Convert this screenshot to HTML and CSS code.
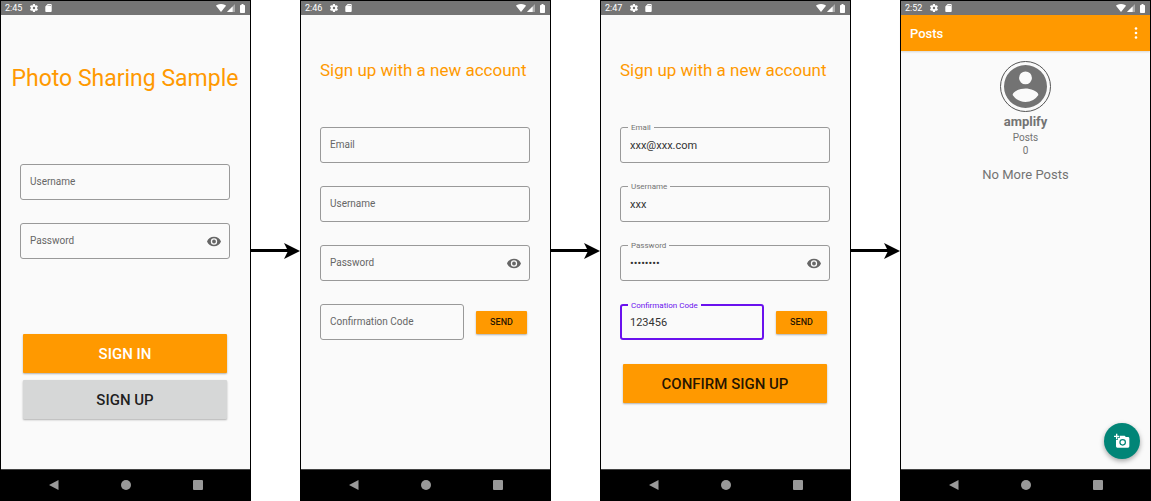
FILE: index.html
```html
<!DOCTYPE html>
<html lang="en">
<head>
    <meta charset="UTF-8">
    <meta name="viewport" content="width=device-width, initial-scale=1.0">
    <title>Photo Sharing Sample</title>
    <link rel="stylesheet" href="styles.css">
</head>
<body>
    <!-- Shared icons -->
    <svg class="sprite" aria-hidden="true">
        <symbol id="gear" viewBox="2 2 20 20">
            <path d="M19.4 13a7.500 7.500 0 0 0 0-2l2.200-1.600c.2-.2.2-.4.1-.7l-2.100-3.600c-.1-.2-.4-.3-.6-.2l-2.500 1a7.300 7.300 0 0 0-1.700-1l-.4-2.600a.5.5 0 0 0-.5-.4H9.800a.5.5 0 0 0-.5.4l-.4 2.600a7.300 7.300 0 0 0-1.700 1l-2.500-1c-.2-.1-.5 0-.6.2L2 8.700c-.1.2-.1.5.1.7L4.300 11a7.500 7.500 0 0 0 0 2l-2.200 1.600c-.2.2-.2.4-.1.7l2.100 3.600c.1.2.4.3.6.2l2.500-1c.5.4 1.100.7 1.700 1l.4 2.600c0 .2.2.4.5.4h4.200c.2 0 .5-.2.5-.4l.4-2.600c.6-.3 1.200-.6 1.700-1l2.500 1c.2.1.5 0 .6-.2l2.100-3.600c.1-.2.1-.5-.1-.7zM12 15a3 3 0 1 1 0-6 3 3 0 0 1 0 6z"/>
        </symbol>
        <symbol id="sd" viewBox="0 0 16 20">
            <path d="M14 0H6L0 6v12c0 1.100.9 2 2 2h12c1.100 0 2-.9 2-2V2c0-1.100-.9-2-2-2zM8 5H6V3h2zm3 0H9V3h2zm3 0h-2V3h2z"/>
        </symbol>
        <symbol id="wifi" viewBox="0 0 24 19">
            <path d="M12 19 24 4C23.500 3.600 19 0 12 0S.5 3.600 0 4z"/>
        </symbol>
        <symbol id="signal" viewBox="0 0 20 20">
            <path opacity=".4" d="M0 20h20V0z"/>
            <path d="M0 20h14V6z"/>
        </symbol>
        <symbol id="battery" viewBox="0 0 10 18">
            <path d="M8.700 2H7V0H3v2H1.300C.6 2 0 2.600 0 3.300v13.400C0 17.400.6 18 1.300 18h7.400c.7 0 1.300-.6 1.300-1.300V3.300C10 2.600 9.400 2 8.700 2z"/>
        </symbol>
        <symbol id="eye" viewBox="1 4 22 16">
            <path d="M12 4.500C7 4.500 2.700 7.600 1 12c1.700 4.400 6 7.500 11 7.500s9.300-3.100 11-7.500c-1.700-4.400-6-7.500-11-7.500zM12 17a5 5 0 1 1 0-10 5 5 0 0 1 0 10zm0-8a3 3 0 1 0 0 6 3 3 0 0 0 0-6z"/>
        </symbol>
        <symbol id="more" viewBox="0 0 4 12">
            <circle cx="2" cy="1.500" r="1.300"/><circle cx="2" cy="6" r="1.300"/><circle cx="2" cy="10.500" r="1.300"/>
        </symbol>
        <symbol id="person" viewBox="2 2 20 20">
            <path d="M12 2a10 10 0 1 0 0 20 10 10 0 0 0 0-20zm0 3a3 3 0 1 1 0 6 3 3 0 0 1 0-6zm0 14.200a7.200 7.200 0 0 1-6-3.220c.03-1.990 4-3.080 6-3.080s5.970 1.090 6 3.080a7.200 7.200 0 0 1-6 3.220z"/>
        </symbol>
        <symbol id="add-photo" viewBox="0 0 24 24">
            <path d="M3 4V1h2v3h3v2H5v3H3V6H0V4zm3 6V7h3V4h7l1.800 2H21a2 2 0 0 1 2 2v12a2 2 0 0 1-2 2H5a2 2 0 0 1-2-2V10zm7 9a5 5 0 1 0 0-10 5 5 0 0 0 0 10zm-3.200-5a3.200 3.200 0 1 0 6.400 0 3.200 3.200 0 0 0-6.400 0z"/>
        </symbol>
        <symbol id="back" viewBox="0 0 10 10"><path d="M9.500 0v10L0 5z"/></symbol>
        <symbol id="home" viewBox="0 0 10 10"><circle cx="5" cy="5" r="5"/></symbol>
        <symbol id="recent" viewBox="0 0 10 10"><rect width="10" height="10" rx="1"/></symbol>
        <symbol id="arrow-head" viewBox="0 0 16 16"><path d="M16 8 0 16l4-8-4-8z"/></symbol>
    </svg>

    <div class="flow">
        <!-- Sign in -->
        <section class="phone">
            <div class="status-bar">
                <span class="time">2:45</span>
                <svg class="icon-gear"><use href="#gear"/></svg>
                <svg class="icon-sd"><use href="#sd"/></svg>
                <span class="spacer"></span>
                <svg class="icon-wifi"><use href="#wifi"/></svg>
                <svg class="icon-signal"><use href="#signal"/></svg>
                <svg class="icon-battery"><use href="#battery"/></svg>
            </div>
            <form class="screen">
                <h1 class="app-title">Photo Sharing Sample</h1>
                <div class="fields">
                    <div class="field">
                        <input type="text" id="login-username" placeholder=" ">
                        <label for="login-username">Username</label>
                    </div>
                    <div class="field">
                        <input type="password" id="login-password" placeholder=" ">
                        <label for="login-password">Password</label>
                        <button type="button" class="toggle" aria-label="Show password"><svg><use href="#eye"/></svg></button>
                    </div>
                </div>
                <div class="actions login-actions">
                    <button type="button" class="btn btn-primary btn-light">Sign in</button>
                    <button type="button" class="btn btn-grey">Sign up</button>
                </div>
            </form>
            <nav class="nav-bar">
                <button type="button" aria-label="Back"><svg><use href="#back"/></svg></button>
                <button type="button" aria-label="Home"><svg><use href="#home"/></svg></button>
                <button type="button" aria-label="Recent apps"><svg><use href="#recent"/></svg></button>
            </nav>
        </section>

        <div class="arrow"><span class="line"></span><svg><use href="#arrow-head"/></svg></div>

        <!-- Sign up, empty -->
        <section class="phone">
            <div class="status-bar">
                <span class="time">2:46</span>
                <svg class="icon-gear"><use href="#gear"/></svg>
                <svg class="icon-sd"><use href="#sd"/></svg>
                <span class="spacer"></span>
                <svg class="icon-wifi"><use href="#wifi"/></svg>
                <svg class="icon-signal"><use href="#signal"/></svg>
                <svg class="icon-battery"><use href="#battery"/></svg>
            </div>
            <form class="screen">
                <h2 class="form-title">Sign up with a new account</h2>
                <div class="fields">
                    <div class="field">
                        <input type="text" id="new-email" placeholder=" ">
                        <label for="new-email">Email</label>
                    </div>
                    <div class="field">
                        <input type="text" id="new-username" placeholder=" ">
                        <label for="new-username">Username</label>
                    </div>
                    <div class="field">
                        <input type="password" id="new-password" placeholder=" ">
                        <label for="new-password">Password</label>
                        <button type="button" class="toggle" aria-label="Show password"><svg><use href="#eye"/></svg></button>
                    </div>
                    <div class="code-row">
                        <div class="field">
                            <input type="text" id="new-code" placeholder=" ">
                            <label for="new-code">Confirmation Code</label>
                        </div>
                        <button type="button" class="btn btn-primary btn-small">Send</button>
                    </div>
                </div>
            </form>
            <nav class="nav-bar">
                <button type="button" aria-label="Back"><svg><use href="#back"/></svg></button>
                <button type="button" aria-label="Home"><svg><use href="#home"/></svg></button>
                <button type="button" aria-label="Recent apps"><svg><use href="#recent"/></svg></button>
            </nav>
        </section>

        <div class="arrow"><span class="line"></span><svg><use href="#arrow-head"/></svg></div>

        <!-- Sign up, filled in -->
        <section class="phone">
            <div class="status-bar">
                <span class="time">2:47</span>
                <svg class="icon-gear"><use href="#gear"/></svg>
                <svg class="icon-sd"><use href="#sd"/></svg>
                <span class="spacer"></span>
                <svg class="icon-wifi"><use href="#wifi"/></svg>
                <svg class="icon-signal"><use href="#signal"/></svg>
                <svg class="icon-battery"><use href="#battery"/></svg>
            </div>
            <form class="screen">
                <h2 class="form-title">Sign up with a new account</h2>
                <div class="fields">
                    <div class="field">
                        <input type="text" id="email" placeholder=" " value="xxx@xxx.com">
                        <label for="email">Email</label>
                    </div>
                    <div class="field">
                        <input type="text" id="username" placeholder=" " value="xxx">
                        <label for="username">Username</label>
                    </div>
                    <div class="field">
                        <input type="password" id="password" placeholder=" " value="password">
                        <label for="password">Password</label>
                        <button type="button" class="toggle" aria-label="Show password"><svg><use href="#eye"/></svg></button>
                    </div>
                    <div class="code-row">
                        <div class="field active">
                            <input type="text" id="code" placeholder=" " value="123456">
                            <label for="code">Confirmation Code</label>
                        </div>
                        <button type="button" class="btn btn-primary btn-small">Send</button>
                    </div>
                </div>
                <div class="actions confirm-actions">
                    <button type="button" class="btn btn-primary">Confirm sign up</button>
                </div>
            </form>
            <nav class="nav-bar">
                <button type="button" aria-label="Back"><svg><use href="#back"/></svg></button>
                <button type="button" aria-label="Home"><svg><use href="#home"/></svg></button>
                <button type="button" aria-label="Recent apps"><svg><use href="#recent"/></svg></button>
            </nav>
        </section>

        <div class="arrow"><span class="line"></span><svg><use href="#arrow-head"/></svg></div>

        <!-- Posts -->
        <section class="phone">
            <div class="status-bar">
                <span class="time">2:52</span>
                <svg class="icon-gear"><use href="#gear"/></svg>
                <svg class="icon-sd"><use href="#sd"/></svg>
                <span class="spacer"></span>
                <svg class="icon-wifi"><use href="#wifi"/></svg>
                <svg class="icon-signal"><use href="#signal"/></svg>
                <svg class="icon-battery"><use href="#battery"/></svg>
            </div>
            <header class="app-bar">
                <h2>Posts</h2>
                <button type="button" aria-label="More options"><svg><use href="#more"/></svg></button>
            </header>
            <div class="profile">
                <div class="avatar"><svg><use href="#person"/></svg></div>
                <h3>amplify</h3>
                <p class="count">Posts</p>
                <p class="count">0</p>
                <p class="empty">No More Posts</p>
                <button type="button" class="fab" aria-label="Add photo"><svg><use href="#add-photo"/></svg></button>
            </div>
            <nav class="nav-bar">
                <button type="button" aria-label="Back"><svg><use href="#back"/></svg></button>
                <button type="button" aria-label="Home"><svg><use href="#home"/></svg></button>
                <button type="button" aria-label="Recent apps"><svg><use href="#recent"/></svg></button>
            </nav>
        </section>
    </div>
</body>
</html>
```

FILE: styles.css
```css
:root {
    --orange: #ff9900;
    --screen: #fafafa;
    --status: #757575;
    --grey: #737373;
    --outline: #999;
    --purple: #6a11ee;
    --teal: #018577;
}

* {
    box-sizing: border-box;
}

body {
    margin: 0;
    background: #fff;
    font-family: Roboto, "Liberation Sans", sans-serif;
    font-size: 10px;
}

h1, h2, h3, p {
    margin: 0;
    font-weight: 400;
}

button {
    padding: 0;
    border: none;
    background: none;
    color: inherit;
    font-family: inherit;
    cursor: pointer;
}

svg {
    display: block;
    fill: currentColor;
}

.sprite {
    display: none;
}

.flow {
    display: flex;
    min-height: 100vh;
}

.phone {
    flex: 1;
    min-width: 0;
    display: flex;
    flex-direction: column;
    border: 1px solid #000;
    background: var(--screen);
}

/* Arrows between the screens */
.arrow {
    width: 49px;
    display: flex;
    align-items: center;
}

.arrow .line {
    flex: 1;
    height: 3px;
    margin-right: -4px;
    background: #000;
}

.arrow svg {
    width: 16px;
    height: 16px;
}

/* System bars */
.status-bar {
    display: flex;
    align-items: center;
    height: 14px;
    padding: 0 5px 0 4px;
    background: var(--status);
    color: #fff;
}

.time {
    width: 25px;
    font-size: 9px;
    line-height: 14px;
}

.spacer {
    flex: 1;
}

.icon-gear {
    width: 8px;
    height: 8px;
    margin-right: 7px;
}

.icon-sd {
    width: 7px;
    height: 8px;
}

.icon-wifi {
    width: 10px;
    height: 8px;
    margin-right: 1px;
}

.icon-signal {
    width: 8px;
    height: 8px;
    margin-right: 5px;
}

.icon-battery {
    width: 5px;
    height: 9px;
}

.nav-bar {
    display: flex;
    justify-content: center;
    align-items: center;
    gap: 62px;
    height: 31px;
    border-top: 1px solid #444;
    background: #000;
    color: #999;
}

.nav-bar svg {
    width: 10px;
    height: 10px;
}

/* Forms */
.screen {
    flex: 1;
    padding: 45px 20px 0 19px;
}

.app-title {
    margin: 5px -19px 71px;
    color: var(--orange);
    font-size: 23px;
    line-height: 28px;
    text-align: center;
    white-space: nowrap;
}

.form-title {
    margin-bottom: 47px;
    color: var(--orange);
    font-size: 17px;
    line-height: 20px;
    white-space: nowrap;
}

.fields {
    display: flex;
    flex-direction: column;
    gap: 23px;
}

.field {
    position: relative;
    display: flex;
    align-items: center;
    height: 36px;
    padding: 0 8px 0 9px;
    border: 1px solid var(--outline);
    border-radius: 3px;
}

.field input {
    flex: 1;
    min-width: 0;
    padding: 2px 0 0;
    border: none;
    outline: none;
    background: transparent;
    color: #333;
    font-family: inherit;
    font-size: 11px;
    line-height: 16px;
}

.field label {
    position: absolute;
    top: 9px;
    left: 9px;
    color: #666;
    line-height: 16px;
    pointer-events: none;
}

/* The label moves up onto the outline once there is a value */
.field input:not(:placeholder-shown) + label {
    top: -5px;
    left: 7px;
    padding: 0 3px;
    background: var(--screen);
    color: var(--grey);
    font-size: 8px;
    line-height: 10px;
}

.field.active {
    padding: 0 7px 0 8px;
    border: 2px solid var(--purple);
}

.field.active input:not(:placeholder-shown) + label {
    left: 6px;
    color: var(--purple);
}

.toggle {
    color: #666;
}

.toggle svg {
    width: 14px;
    height: 11px;
}

.code-row {
    display: flex;
    align-items: center;
    gap: 12px;
    padding-right: 3px;
}

.code-row .field {
    flex: 1;
    min-width: 0;
}

.btn {
    height: 39px;
    border-radius: 1px;
    box-shadow: 0 1px 2px rgba(0, 0, 0, 0.3);
    color: rgba(0, 0, 0, 0.87);
    font-size: 15px;
    font-weight: 500;
    text-transform: uppercase;
}

.btn-primary {
    background: var(--orange);
}

.btn-light {
    color: #fff;
}

.btn-grey {
    background: #d6d7d7;
}

.btn-small {
    width: 51px;
    height: 23px;
    font-size: 9px;
}

.actions {
    display: flex;
    flex-direction: column;
    gap: 7px;
    padding: 0 3px;
}

.login-actions {
    margin-top: 75px;
}

.confirm-actions {
    margin-top: 24px;
}

/* Posts screen */
.app-bar {
    display: flex;
    justify-content: space-between;
    align-items: center;
    height: 36px;
    padding: 0 12px 0 9px;
    background: var(--orange);
    box-shadow: 0 1px 2px rgba(0, 0, 0, 0.15);
    color: #fff;
}

.app-bar h2 {
    font-size: 13px;
    font-weight: 500;
}

.app-bar svg {
    width: 4px;
    height: 12px;
}

.profile {
    position: relative;
    flex: 1;
    display: flex;
    flex-direction: column;
    align-items: center;
    padding-top: 10px;
    color: var(--grey);
}

.avatar {
    display: flex;
    align-items: center;
    justify-content: center;
    width: 51px;
    height: 51px;
    border: 1px solid #555;
    border-radius: 50%;
}

.avatar svg {
    width: 43px;
    height: 43px;
}

.profile h3 {
    font-size: 13px;
    font-weight: 700;
    line-height: 19px;
}

.count {
    font-size: 10px;
    line-height: 13px;
}

.empty {
    margin-top: 9px;
    font-size: 13px;
    line-height: 18px;
}

.fab {
    position: absolute;
    right: 10px;
    bottom: 10px;
    display: flex;
    align-items: center;
    justify-content: center;
    width: 36px;
    height: 36px;
    border-radius: 50%;
    background: var(--teal);
    box-shadow: 0 2px 5px rgba(0, 0, 0, 0.35);
    color: #fff;
}

.fab svg {
    width: 16px;
    height: 16px;
}
```
